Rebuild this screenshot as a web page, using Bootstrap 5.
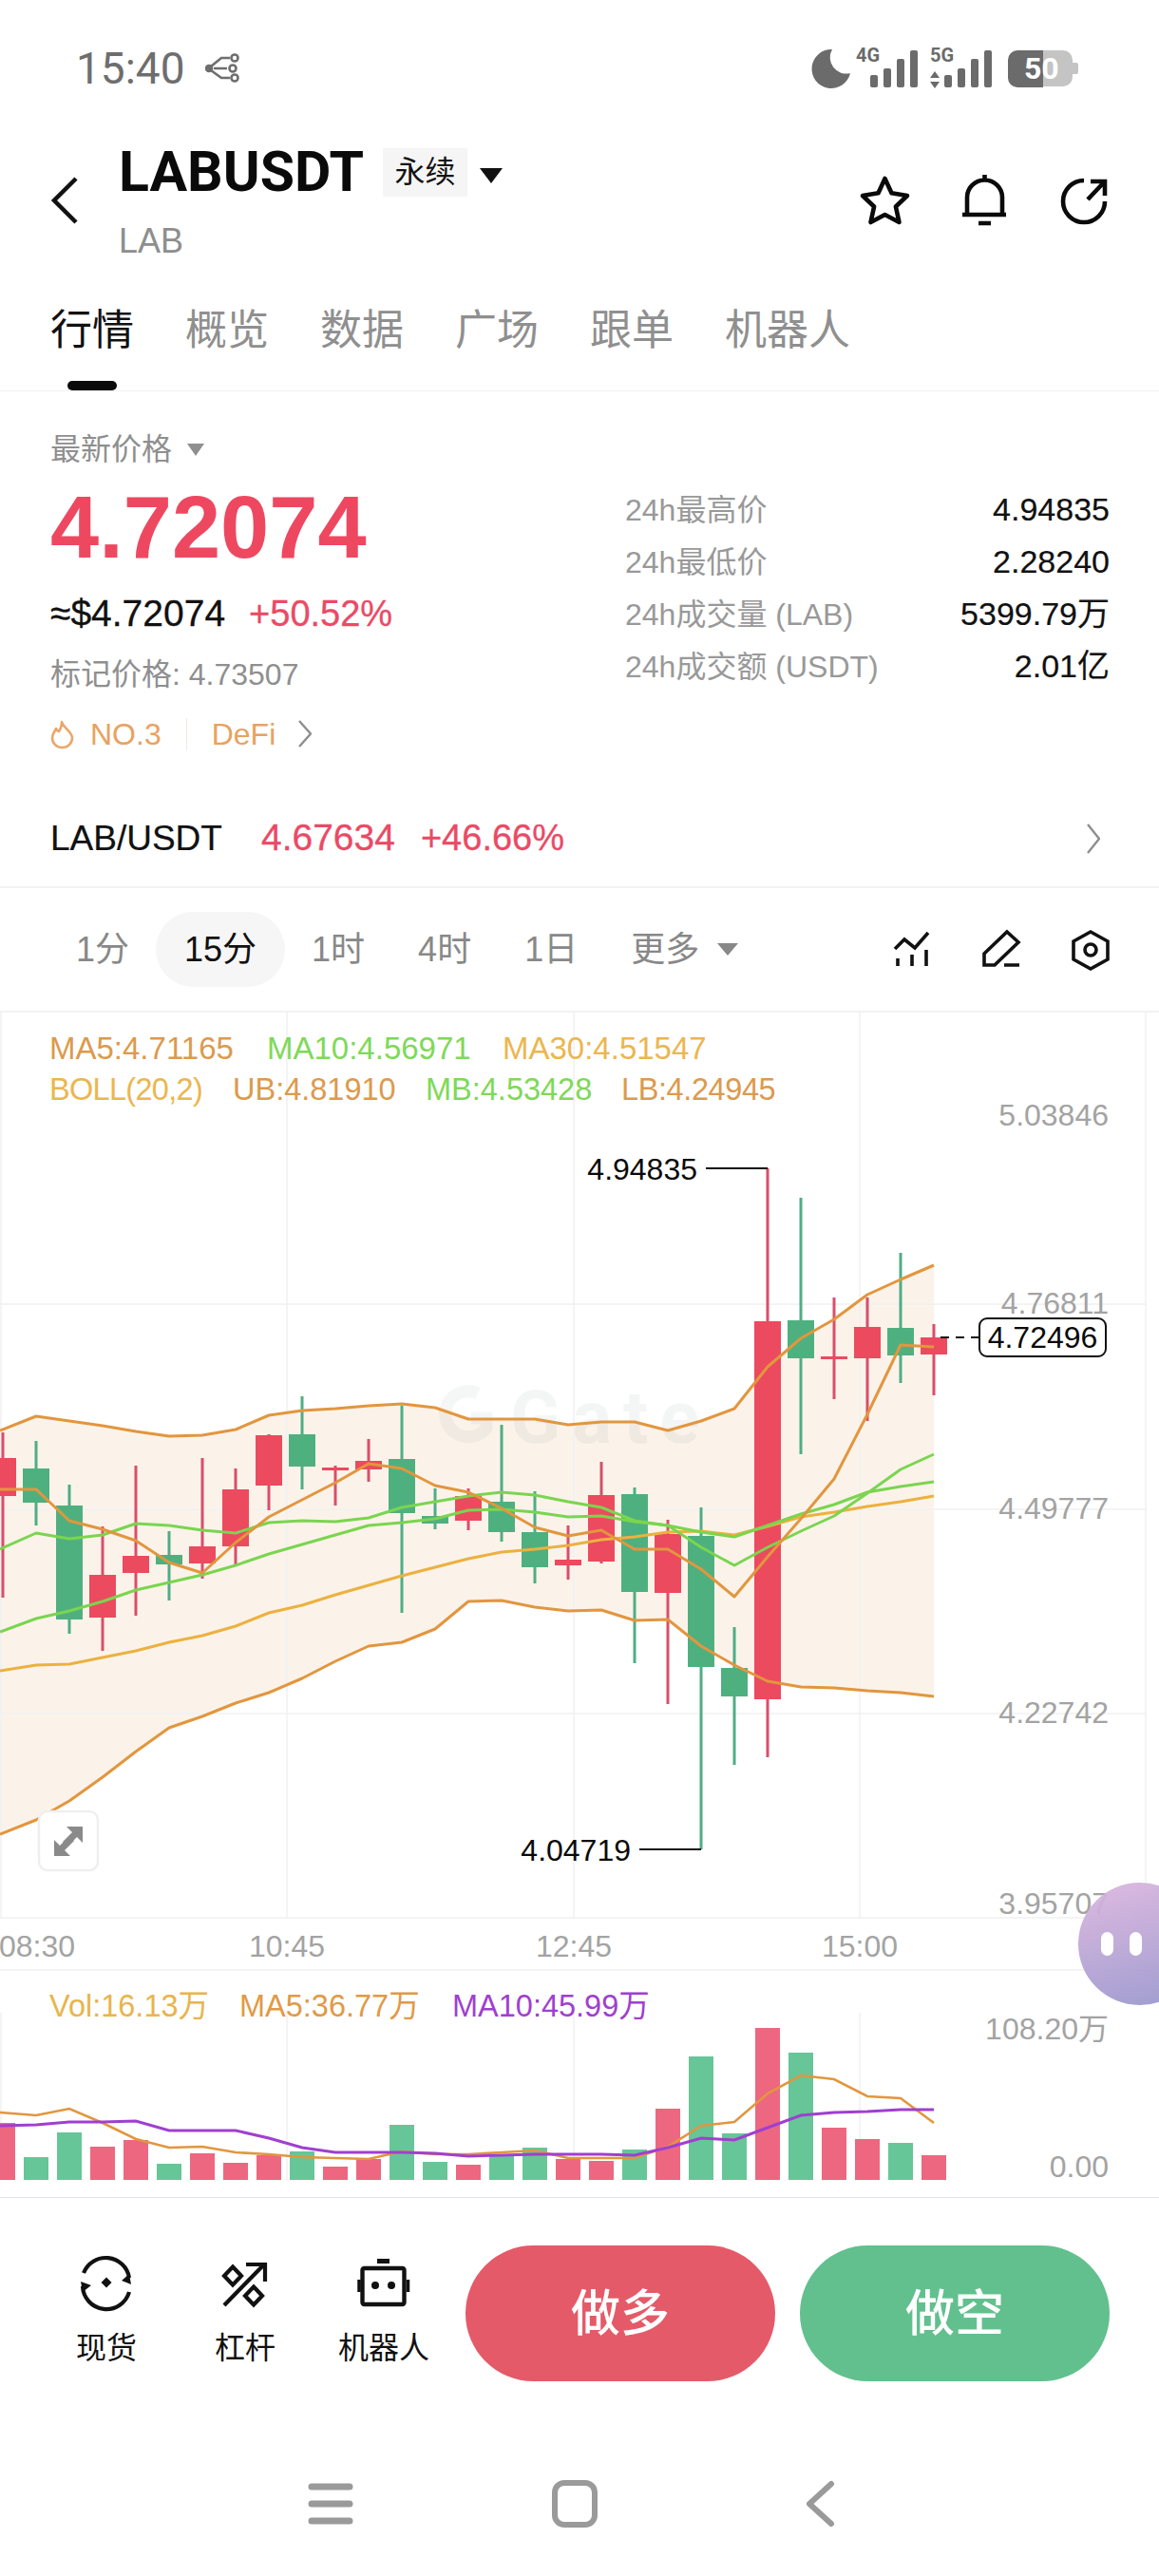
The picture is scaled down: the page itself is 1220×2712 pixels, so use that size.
<!DOCTYPE html>
<html lang="zh-CN">
<head>
<meta charset="utf-8">
<title>LABUSDT</title>
<link href="https://cdn.jsdelivr.net/npm/bootstrap@5.3.0/dist/css/bootstrap.min.css" rel="stylesheet">
<style>
body{width:1220px;height:2712px;margin:0;background:#fff;overflow:hidden;font-family:"Liberation Sans","Noto Sans CJK SC",sans-serif;color:#111}
svg{display:block;flex:none}
.statusbar{height:144px;padding:0 80px}
.clock{font:46px Roboto,sans-serif;color:#6e6e6e;margin-right:21px}
.head-sec{height:148px;padding:0 52px}
.back-ic{margin-right:41px;margin-top:40px}
.title-line{height:72px}
.sym{font:700 59px Roboto,sans-serif;color:#0a0a0a}
.perp{width:89px;height:51px;background:#f5f5f5;font-size:32px;margin:2px 13px 0 20px}
.tri{width:0;height:0;border-style:solid;border-color:#111 transparent transparent;border-width:16px 12px 0}
.tri-h{margin-top:10px}
.sub-sym{height:76px;line-height:76px;font-size:36px;color:#8e8e8e}
.tab-strip{height:120px;padding-left:53px;gap:54px;border-bottom:1px solid #f2f2f2}
.tab-it{font-size:44px;line-height:111px;color:#8f8f8f;height:119px}
.tab-it.on{color:#111}
.tab-bar{width:52px;height:10px;border-radius:5px;background:#0a0a0a;margin-top:-2px}
.price-sec{height:420px;padding-left:53px}
.price-left{width:605px;padding-top:35px}
.l-1{height:52px;font-size:32px;color:#8f8f8f}
.tri-s{border-width:13px 9px 0;border-top-color:#8f8f8f;margin-left:16px}
.l-big{height:110px;font-size:92px;font-weight:700;color:#ee4861;line-height:112px}
.l-usd{height:74px;font-size:38px;gap:25px}
.usd-v{font-size:39px;-webkit-text-stroke:.3px #111}
.red{color:#ea4a66;-webkit-text-stroke:.3px #ea4a66}
.l-mark{height:54px;font-size:32px;color:#8f8f8f}
.l-tags{height:72px;font-size:32px;color:#e9a25f}
.tag-div{width:1px;height:34px;background:#f0e9e0;margin:0 26px}
.price-right{width:510px;padding-top:97px}
.stat-row{height:55px;font-size:32px}
.stat-k{color:#999}
.stat-v{font-size:34px;-webkit-text-stroke:.2px #111}
.pair-row{height:103px;padding:0 62px 0 53px;border-bottom:2px solid #f2f2f2;font-size:39px}
.pair-n{font-size:37px;margin-right:41px;-webkit-text-stroke:.2px #111}
.pair-gap{margin-right:27px}
.pct-s{font-size:38px}
.iv-row{height:131px;padding:0 48px 0 52px;border-bottom:2px solid #f3f3f3;font-size:36px;color:#888}
.iv-it{padding:0 28px;white-space:nowrap}
.iv-on{padding:0 30px;height:79px;line-height:79px;border-radius:40px;background:#f6f6f6;color:#111}
.tri-m{border-width:13px 11px 0;border-top-color:#888;margin-left:-9px}
.iv-tools{gap:46px}
.chart-wrap{height:1247px;overflow:hidden}
.gx{font:32px "Liberation Sans",sans-serif;fill:#a3a3a3}
.lg-a{font:33px "Liberation Sans",sans-serif}
.lg-b{font:32.5px "Liberation Sans",sans-serif}
.ls-boll{letter-spacing:-.7px}
.ls-lb{letter-spacing:-.4px}
.pk{font:32px "Liberation Sans",sans-serif;fill:#0a0a0a}
.vol-lg{font-family:"Liberation Sans","Noto Sans CJK SC",sans-serif;font-size:32.5px}
.vol-ax{font-family:"Liberation Sans","Noto Sans CJK SC",sans-serif;font-size:32px;fill:#a3a3a3}
.float-ball{left:1135px;top:916px;width:129px;height:129px;background:linear-gradient(165deg,#dcb6df,#9795cc);gap:17px;padding:0 0 0 24px;opacity:.93}
.eye{width:13px;height:25px;border-radius:7px;background:#fff}
.act-bar{height:241px;padding:50px 52px 0 39px}
.act-it{width:146px;font-size:32px;height:143px;color:#111;padding-top:10px}
.act-it svg{margin-bottom:14px}
.act-btn{width:326px;height:143px;font-size:52px;font-weight:500;color:#fff;border:0;line-height:1}
.act-long{background:#e55a68;margin-left:13px}
.act-short{background:#62c08e;margin-left:26px}
.act-btn:hover{color:#fff}
.navbar-sys{height:157px;padding:6px 0 0 324px}
.nav-sq{margin:0 218px 0 209px}
</style>
</head>
<body>
<div class="statusbar d-flex align-items-center justify-content-between">
  <div class="d-flex align-items-center">
    <span class="clock">15:40</span>
    <svg width="42" height="32" viewBox="215 55 42 32" fill="none" stroke="#6e6e6e" stroke-width="2.6"><circle cx="219" cy="71" r="3" fill="#6e6e6e"/><path d="M221 69l11-9h9M221 73l11 8h9M224 71h14"/><circle cx="246" cy="60" r="3.5"/><circle cx="244" cy="71" r="3.5"/><circle cx="246" cy="81" r="3.5"/></svg>
  </div>
  <svg width="290" height="52" viewBox="850 44 290 52">
    <g fill="#6b6b6b">
      <path d="M876 50A20.5 20.5 0 1 0 895 75A17 17 0 0 1 876 50Z"/>
      <text x="901" y="63" font-family="Roboto,sans-serif" font-weight="700" font-size="20">4G</text>
      <rect x="916" y="77" width="8" height="13" rx="2"/><rect x="930" y="70" width="8" height="20" rx="2"/><rect x="944" y="60" width="8" height="30" rx="2"/><rect x="958" y="51" width="8" height="39" rx="2"/>
      <text x="979" y="63" font-family="Roboto,sans-serif" font-weight="700" font-size="20">5G</text>
      <path d="M984 73l5 7h-10zM984 91l5-7h-10z"/>
      <rect x="994" y="77" width="8" height="13" rx="2"/><rect x="1008" y="70" width="8" height="20" rx="2"/><rect x="1022" y="60" width="8" height="30" rx="2"/><rect x="1036" y="51" width="8" height="39" rx="2"/>
      <path d="M1098 51H1071a10 10 0 0 0-10 10v19a10 10 0 0 0 10 10h27z"/>
    </g>
    <path d="M1098 51h21a10 10 0 0 1 10 10v3h4a2 2 0 0 1 2 2v8a2 2 0 0 1-2 2h-4v3a10 10 0 0 1-10 10h-21z" fill="#c4c4c4"/>
    <text x="1078" y="81" font-family="Roboto,sans-serif" font-weight="700" font-size="32" fill="#fff">50</text>
  </svg>
</div>

<div class="head-sec d-flex justify-content-between">
  <div class="d-flex">
    <svg class="back-ic" width="32" height="56" viewBox="54 182 32 56" fill="none" stroke="#111" stroke-width="4.5"><path d="M82 186L59 209L82 232"/></svg>
    <div>
      <div class="title-line d-flex align-items-center">
        <span class="sym">LABUSDT</span>
        <span class="perp d-flex align-items-center justify-content-center">永续</span>
        <span class="tri tri-h"></span>
      </div>
      <div class="sub-sym">LAB</div>
    </div>
  </div>
  <div class="d-flex gap-5 pt-4 mt-3">
    <svg width="56" height="56" viewBox="904 182 56 56" fill="none" stroke="#0a0a0a" stroke-width="4.6" stroke-linejoin="round"><path d="M931.5 186L938.5 201.3L955 204L942.9 215.5L946.5 232L931.5 224L916.5 232L920.1 215.5L908 204L924.5 201.3Z"/></svg>
    <svg width="56" height="56" viewBox="1008 182 56 56" fill="none" stroke="#0a0a0a" stroke-width="4.6"><path d="M1018 224V206a18.5 18.5 0 0 1 37 0V224M1013 224H1059M1036.5 181V188M1030 233H1043"/></svg>
    <svg width="56" height="56" viewBox="1112 182 56 56" fill="none" stroke="#0a0a0a" stroke-width="4.6"><path d="M1141 188A22 22 0 1 0 1163 210M1145 208L1162 190M1148 189H1163V204"/></svg>
  </div>
</div>

<div class="tab-strip d-flex">
  <div class="tab-it on d-flex flex-column align-items-center"><span>行情</span><span class="tab-bar"></span></div>
  <div class="tab-it">概览</div>
  <div class="tab-it">数据</div>
  <div class="tab-it">广场</div>
  <div class="tab-it">跟单</div>
  <div class="tab-it">机器人</div>
</div>

<div class="price-sec d-flex">
  <div class="price-left">
    <div class="l-1 d-flex align-items-center">最新价格<span class="tri tri-s"></span></div>
    <div class="l-big">4.72074</div>
    <div class="l-usd d-flex align-items-center"><span class="usd-v">≈$4.72074</span><span class="red">+50.52%</span></div>
    <div class="l-mark d-flex align-items-center">标记价格: 4.73507</div>
    <div class="l-tags d-flex align-items-center">
      <svg class="me-3" width="26" height="32" viewBox="56 757 26 32" fill="none" stroke="#eba66a" stroke-width="2.6" stroke-linejoin="round"><path d="M68 760C70 767 79 770 79 777a10.5 10 0 0 1-21 0c0-5 3-7 4-10c1 2 2 3 3 3c2-3 3-6 3-10z"/></svg>
      <span>NO.3</span><span class="tag-div"></span><span>DeFi</span>
      <svg class="ms-4" width="14" height="30" viewBox="316 759 14 30" fill="none" stroke="#8f8f8f" stroke-width="2.4"><path d="M317 760L329 773.500L317 787"/></svg>
    </div>
  </div>
  <div class="price-right">
    <div class="stat-row d-flex align-items-center justify-content-between"><span class="stat-k">24h最高价</span><span class="stat-v">4.94835</span></div>
    <div class="stat-row d-flex align-items-center justify-content-between"><span class="stat-k">24h最低价</span><span class="stat-v">2.28240</span></div>
    <div class="stat-row d-flex align-items-center justify-content-between"><span class="stat-k">24h成交量 (LAB)</span><span class="stat-v">5399.79万</span></div>
    <div class="stat-row d-flex align-items-center justify-content-between"><span class="stat-k">24h成交额 (USDT)</span><span class="stat-v">2.01亿</span></div>
  </div>
</div>

<div class="pair-row d-flex align-items-center">
  <span class="pair-n">LAB/USDT</span><span class="red pair-gap">4.67634</span><span class="red pct-s">+46.66%</span>
  <svg class="ms-auto" width="14" height="32" viewBox="1145 866 14 32" fill="none" stroke="#8f8f8f" stroke-width="2.4"><path d="M1146 867L1158 882L1146 897"/></svg>
</div>

<div class="iv-row d-flex align-items-center">
  <span class="iv-it">1分</span><span class="iv-on">15分</span><span class="iv-it">1时</span><span class="iv-it">4时</span><span class="iv-it">1日</span><span class="iv-it">更多</span><span class="tri tri-m"></span>
  <div class="iv-tools d-flex ms-auto">
    <svg width="48" height="48" viewBox="936 977 48 48" fill="none" stroke="#111" stroke-width="3.6"><path d="M942 1000L952 990L963 999L977 983M945 1010V1018M960 1006V1018M975 1001V1018"/></svg>
    <svg width="48" height="48" viewBox="1030 977 48 48" fill="none" stroke="#111" stroke-width="3.6"><path d="M1060 982L1072 993L1047 1017H1036V1005ZM1057 1017H1073"/></svg>
    <svg width="48" height="48" viewBox="1124 977 48 48" fill="none" stroke="#111" stroke-width="3.6"><path d="M1148 982L1166 992V1011L1148 1021L1130 1011V992Z"/><circle cx="1148" cy="1001" r="6"/></svg>
  </div>
</div>

<div class="chart-wrap position-relative">
<svg width="1220" height="1247" viewBox="0 1067 1220 1247">
  <polygon fill="#fbf3ea" points="0,1507 38,1492 73,1497 108,1502 143,1508 178,1513 213,1512 248,1506 283,1491 318,1486 353,1484 388,1481 423,1479 458,1483 493,1495 528,1495 563,1495 598,1501 633,1498 668,1498 703,1507 738,1497 773,1484 808,1440 843,1410 878,1390 913,1364 948,1348 983,1333 983,1787 948,1783 913,1781 878,1778 843,1777 808,1771 773,1754 738,1734 703,1706 668,1707 633,1696 598,1697 563,1693 528,1686 493,1687 458,1716 423,1730 388,1734 353,1750 318,1768 283,1783 248,1794 213,1808 178,1820 143,1845 108,1872 73,1897 38,1917 0,1932"/>
  <path stroke="#f1f1f1" stroke-width="1.5" fill="none" d="M0 1374H1206M0 1590H1206M0 1805H1206M0 2020H1206M0 2075H1220M1 1067V2020M302 1067V2020M604 1067V2020M905 1067V2020M1206 1067V2020M1 2120V2296M302 2120V2296M604 2120V2296M905 2120V2296"/>
  <g opacity=".06" fill="#56606a">
    <path d="M503 1468A24 24 0 1 0 512 1504V1494H496" fill="none" stroke="#56606a" stroke-width="13"/>
    <text x="537" y="1520" font-family="Roboto,sans-serif" font-weight="700" font-size="78" letter-spacing="12">Gate</text>
  </g>
  <path fill="none" stroke="#d94f6b" stroke-width="3" d="M3 1509V1683M108 1608V1739M143 1544V1702M213 1536V1663M248 1547V1649M283 1511V1591M353 1544V1586M388 1516V1561M493 1568V1612M598 1607V1664M633 1540V1647M703 1601V1795M808 1231V1851M878 1367V1474M913 1367V1497M983 1395V1470"/>
  <path fill="#ec4a5e" d="M-11 1536h28v40h-28zM94 1659h28v45h-28zM129 1639h28v18h-28zM199 1629h28v18h-28zM234 1569h28v60h-28zM269 1512h28v53h-28zM339 1546h28v3h-28zM374 1539h28v9h-28zM479 1576h28v26h-28zM584 1643h28v6h-28zM619 1575h28v70h-28zM689 1616h28v62h-28zM794 1392h28v398h-28zM864 1429h28v3h-28zM899 1398h28v33h-28zM969 1409h28v18h-28z"/>
  <path fill="none" stroke="#4fad85" stroke-width="3" d="M38 1518V1607M73 1564V1721M178 1613V1686M318 1471V1569M423 1481V1699M458 1568V1611M528 1501V1624M563 1571V1668M668 1567V1752M738 1588V1948M773 1714V1859M843 1262V1532M948 1320V1457"/>
  <path fill="#4fb07f" d="M24 1547h28v36h-28zM59 1586h28v120h-28zM164 1638h28v10h-28zM304 1511h28v34h-28zM409 1537h28v57h-28zM444 1597h28v8h-28zM514 1582h28v32h-28zM549 1614h28v37h-28zM654 1574h28v103h-28zM724 1618h28v138h-28zM759 1757h28v30h-28zM829 1391h28v40h-28zM934 1399h28v29h-28z"/>
  <g fill="none" stroke-width="3" stroke-linejoin="round">
    <polyline stroke="#e2963e" points="0,1507 38,1492 73,1497 108,1502 143,1508 178,1513 213,1512 248,1506 283,1491 318,1486 353,1484 388,1481 423,1479 458,1483 493,1495 528,1495 563,1495 598,1501 633,1498 668,1498 703,1507 738,1497 773,1484 808,1440 843,1410 878,1390 913,1364 948,1348 983,1333"/>
    <polyline stroke="#e2963e" points="0,1932 38,1917 73,1897 108,1872 143,1845 178,1820 213,1808 248,1794 283,1783 318,1768 353,1750 388,1734 423,1730 458,1716 493,1687 528,1686 563,1693 598,1697 633,1696 668,1707 703,1706 738,1734 773,1754 808,1771 843,1777 878,1778 913,1781 948,1783 983,1787"/>
    <polyline stroke="#ecb13f" points="0,1760 38,1754 73,1753 108,1746 143,1739 178,1730 213,1723 248,1713 283,1699 318,1691 353,1680 388,1670 423,1660 458,1651 493,1642 528,1635 563,1632 598,1628 633,1622 668,1619 703,1614 738,1613 773,1617 808,1608 843,1598 878,1593 913,1587 948,1582 983,1576"/>
    <polyline stroke="#7ad54f" points="0,1719 38,1705 73,1697 108,1687 143,1675 178,1667 213,1659 248,1649 283,1637 318,1627 353,1617 388,1607 423,1604 458,1600 493,1591 528,1590 563,1593 598,1598 633,1597 668,1603 703,1607 738,1614 773,1619 808,1607 843,1595 878,1585 913,1572 948,1566 983,1561"/>
    <polyline stroke="#7ad54f" points="0,1632 38,1615 73,1621 108,1617 143,1605 178,1607 213,1612 248,1615 283,1604 318,1602 353,1603 388,1599 423,1588 458,1582 493,1576 528,1572 563,1575 598,1582 633,1588 668,1602 703,1607 738,1630 773,1649 808,1630 843,1613 878,1597 913,1573 948,1548 983,1532"/>
    <polyline stroke="#e2963e" points="0,1569 38,1569 73,1602 108,1611 143,1623 178,1646 213,1657 248,1625 283,1598 318,1580 353,1562 388,1542 423,1547 458,1565 493,1572 528,1589 563,1609 598,1618 633,1612 668,1632 703,1632 738,1653 773,1682 808,1640 843,1600 878,1558 913,1490 948,1417 983,1419"/>
  </g>
  <g class="gx" text-anchor="end">
    <text x="1167" y="1186">5.03846</text><text x="1167" y="1384">4.76811</text><text x="1167" y="1600">4.49777</text><text x="1167" y="1815">4.22742</text><text x="1167" y="2016">3.95707</text>
  </g>
  <g class="gx" text-anchor="middle">
    <text x="39" y="2061">08:30</text><text x="302" y="2061">10:45</text><text x="604" y="2061">12:45</text><text x="905" y="2061">15:00</text>
  </g>
  <g class="lg-a">
    <text x="52" y="1116" fill="#dc9a4c">MA5:4.71165</text><text x="281" y="1116" fill="#7ed957">MA10:4.56971</text><text x="529" y="1116" fill="#ecb64e">MA30:4.51547</text>
  </g>
  <g class="lg-b">
    <text class="ls-boll" x="52" y="1159" fill="#ecb64e">BOLL(20,2)</text><text x="245" y="1159" fill="#dc9a4c">UB:4.81910</text><text x="448" y="1159" fill="#7ed957">MB:4.53428</text><text class="ls-lb" x="654" y="1159" fill="#dc9a4c">LB:4.24945</text>
  </g>
  <text class="pk" x="734" y="1243" text-anchor="end">4.94835</text>
  <path stroke="#111" stroke-width="2" fill="none" d="M743 1231H808M673 1948H738"/>
  <text class="pk" x="664" y="1960" text-anchor="end">4.04719</text>
  <path stroke="#111" stroke-width="2" stroke-dasharray="9 7" fill="none" d="M990 1409H1030"/>
  <rect x="1031" y="1389" width="133" height="40" rx="8" fill="#fff" stroke="#111" stroke-width="2"/>
  <text class="pk" x="1097.500" y="1420" text-anchor="middle">4.72496</text>
  <rect x="41" y="1908" width="62" height="62" rx="9" fill="#fff" stroke="#efefef" stroke-width="2.500"/>
  <path fill="#8a8a8a" d="M87 1924V1941L81 1935L71 1945L66 1940L76 1930L70 1924ZM57 1955V1938L63 1944L73 1934L78 1939L68 1949L74 1955Z"/>
  <g class="vol-lg">
    <text x="52" y="2124" fill="#e9b44c">Vol:16.13万</text><text x="252" y="2124" fill="#e09a47">MA5:36.77万</text><text x="476" y="2124" fill="#a03fd0">MA10:45.99万</text>
  </g>
  <text class="vol-ax" x="1167" y="2148" text-anchor="end">108.20万</text>
  <text class="vol-ax" x="1167" y="2293" text-anchor="end">0.00</text>
  <path fill="#ed6780" d="M-10 2236h26v60h-26zM95 2261h26v35h-26zM130 2254h26v42h-26zM200 2268h26v28h-26zM235 2278h26v18h-26zM270 2270h26v26h-26zM340 2282h26v14h-26zM375 2274h26v22h-26zM480 2280h26v16h-26zM585 2274h26v22h-26zM620 2276h26v20h-26zM690 2221h26v75h-26zM795 2136h26v160h-26zM865 2241h26v55h-26zM900 2253h26v43h-26zM970 2270h26v26h-26z"/>
  <path fill="#66c698" d="M25 2272h26v24h-26zM60 2246h26v50h-26zM165 2279h26v17h-26zM305 2266h26v30h-26zM410 2238h26v58h-26zM445 2277h26v19h-26zM515 2270h26v26h-26zM550 2262h26v34h-26zM655 2264h26v32h-26zM725 2166h26v130h-26zM760 2247h26v49h-26zM830 2162h26v134h-26zM935 2257h26v39h-26z"/>
  <polyline fill="none" stroke="#e2963e" stroke-width="2.600" points="0,2225 38,2228 73,2221 108,2236 143,2253 178,2262 213,2261 248,2267 283,2269 318,2272 353,2273 388,2274 423,2266 458,2269 493,2269 528,2267 563,2265 598,2273 633,2273 668,2273 703,2261 738,2239 773,2235 808,2205 843,2186 878,2190 913,2208 948,2210 983,2236"/>
  <polyline fill="none" stroke="#a03fd0" stroke-width="3" points="0,2239 38,2238 73,2235 108,2235 143,2234 178,2244 213,2244 248,2244 283,2252 318,2262 353,2267 388,2267 423,2267 458,2268 493,2271 528,2270 563,2269 598,2269 633,2269 668,2270 703,2262 738,2252 773,2254 808,2241 843,2228 878,2225 913,2224 948,2222 983,2222"/>
</svg>
<div class="float-ball position-absolute rounded-circle d-flex align-items-center"><span class="eye"></span><span class="eye"></span></div>
</div>

<div class="act-bar d-flex align-items-start border-top">
  <div class="act-it d-flex flex-column align-items-center">
    <svg width="64" height="60" viewBox="80 2375 64 60" fill="none" stroke="#111" stroke-width="4.200"><path d="M88 2394A25 25 0 0 1 136 2399M136 2414A25 25 0 0 1 87 2408"/><path d="M128 2402L138 2406L136 2395ZM96 2407L85 2403L87 2414Z" fill="#111" stroke="none"/><path d="M112 2398.500L117.500 2404L112 2409.500L106.500 2404Z" fill="#111" stroke="none"/></svg>
    <span>现货</span>
  </div>
  <div class="act-it d-flex flex-column align-items-center">
    <svg width="64" height="60" viewBox="225 2375 64 60" fill="none" stroke="#111" stroke-width="4.200"><path d="M235 2428L277 2385M258 2385H278V2403"/><path d="M244 2387.500L253 2397L244 2406.500L235 2397ZM266 2408.500L275 2418L266 2427.500L257 2418Z"/></svg>
    <span>杠杆</span>
  </div>
  <div class="act-it d-flex flex-column align-items-center">
    <svg width="64" height="60" viewBox="372 2375 64 60" fill="none" stroke="#111" stroke-width="4.400"><rect x="381.500" y="2389" width="44" height="38" rx="2"/><path d="M397 2381.500H410" stroke-width="5"/><path d="M378 2401V2414M429.500 2401V2414" stroke-width="3.500"/><circle cx="395" cy="2407" r="4" fill="#111" stroke="none"/><circle cx="412" cy="2407" r="4" fill="#111" stroke="none"/></svg>
    <span>机器人</span>
  </div>
  <button type="button" class="btn act-btn act-long rounded-pill">做多</button>
  <button type="button" class="btn act-btn act-short rounded-pill">做空</button>
</div>

<div class="navbar-sys d-flex align-items-center">
  <svg width="48" height="48" viewBox="324 2612 48 48" fill="none" stroke="#9a9a9a" stroke-width="7" stroke-linecap="round"><path d="M328 2618H368M328 2636H368M328 2654H368"/></svg>
  <svg class="nav-sq" width="48" height="50" viewBox="581 2611 48 50" fill="none" stroke="#9a9a9a" stroke-width="6"><rect x="584" y="2614" width="42" height="44" rx="10"/></svg>
  <svg width="32" height="50" viewBox="847 2611 32 50" fill="none" stroke="#9a9a9a" stroke-width="6" stroke-linecap="round" stroke-linejoin="round"><path d="M875 2615L852 2636L875 2657"/></svg>
</div>
<script src="https://cdn.jsdelivr.net/npm/bootstrap@5.3.0/dist/js/bootstrap.bundle.min.js"></script>
</body>
</html>
